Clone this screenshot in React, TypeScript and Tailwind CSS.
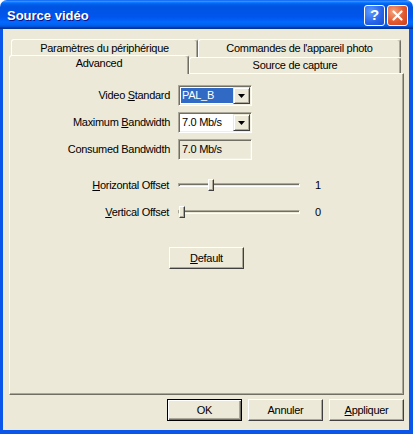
import React from "react";

const titleGradient =
  "bg-[linear-gradient(to_bottom,#0058EE_0%,#3A93FF_4%,#288EFF_6%,#127DFF_8%,#036FFC_10%,#0262EE_14%,#0057E5_20%,#0054E3_24%,#0055EB_56%,#005BF5_66%,#026AFE_76%,#0062EF_86%,#0052D6_92%,#0040AB_94%,#003092_100%)]";

const Tab = ({
  label,
  className,
}: {
  label: string;
  className: string;
}) => (
  <div
    className={`flex items-center justify-center rounded-t-[3px] border-l border-t border-r border-white border-r-[#716F64] bg-[#ECE9D8] shadow-[inset_-1px_0_#ACA899] ${className}`}
  >
    {label}
  </div>
);

const Combo = ({ value, selected = false }: { value: string; selected?: boolean }) => (
  <div className="flex h-[21px] w-[74px] border border-[#ACA899] border-r-white border-b-white bg-white shadow-[inset_1px_1px_#716F64,inset_-1px_-1px_#F1EFE2]">
    <div className="flex flex-1 p-[2px] pr-0">
      <span
        className={`flex flex-1 items-center pl-[1px] ${
          selected ? "bg-[#316AC5] text-white" : "text-black"
        }`}
      >
        {value}
      </span>
    </div>
    <div className="mt-[1px] mr-[1px] flex h-[17px] w-[17px] items-center justify-center border border-[#ECE9D8] border-r-[#404040] border-b-[#404040] bg-[#ECE9D8] shadow-[inset_1px_1px_#fff,inset_-1px_-1px_#ACA899]">
      <svg width="7" height="4" viewBox="0 0 7 4">
        <path d="M0 0h7L3.5 4z" fill="#000" />
      </svg>
    </div>
  </div>
);

const Slider = ({ offset }: { offset: number }) => (
  <div className="relative h-[4px] w-[122px] border border-[#ACA899] border-r-white border-b-white bg-[#ECE9D8] shadow-[inset_1px_1px_#716F64]">
    <div
      className="absolute top-[-5px] h-[12px] w-[6px] border border-white border-r-[#404040] border-b-[#404040] bg-[#ECE9D8] shadow-[inset_-1px_-1px_#ACA899]"
      style={{ left: offset }}
    />
  </div>
);

const Btn = ({
  children,
  primary = false,
  className = "",
}: {
  children: React.ReactNode;
  primary?: boolean;
  className?: string;
}) => (
  <div
    className={`flex h-[22px] w-[75px] items-center justify-center bg-[#ECE9D8] ${
      primary
        ? "border border-black shadow-[inset_1px_1px_#fff,inset_-1px_-1px_#716F64,inset_-2px_-2px_#ACA899]"
        : "border border-white border-r-[#404040] border-b-[#404040] shadow-[inset_-1px_-1px_#ACA899]"
    } ${className}`}
  >
    {children}
  </div>
);

export default function App() {
  return (
    <div className="flex h-[434px] w-[413px] flex-col font-['Liberation_Sans',Arial,sans-serif] text-[11px] tracking-[-0.3px] text-black">
      {/* title bar */}
      <div className={`flex h-[29px] rounded-t-[7px] pl-[7px] pr-[5px] ${titleGradient}`}>
        <span className="flex-1 pt-[6px] text-[13px] font-bold tracking-normal text-white [text-shadow:1px_1px_#0F1089]">
          Source vidéo
        </span>
        <div className="mt-[5px] flex gap-[2px]">
          <div className="flex h-[21px] w-[21px] items-center justify-center rounded-[3px] border border-white bg-[radial-gradient(circle_at_30%_30%,#5E9BFF,#2663E8_60%,#1C4FD0)] text-[15px] font-bold tracking-normal text-white">
            ?
          </div>
          <div className="flex h-[21px] w-[21px] items-center justify-center rounded-[3px] border border-white bg-[radial-gradient(circle_at_30%_30%,#F4A47E,#E2592F_55%,#C8401E)]">
            <svg width="11" height="11" viewBox="0 0 11 11">
              <path d="M1.5 1.5l8 8M9.5 1.5l-8 8" stroke="#fff" strokeWidth="2.2" strokeLinecap="round" />
            </svg>
          </div>
        </div>
      </div>

      {/* body */}
      <div className="flex flex-1 flex-col border-b-[4px] border-l-[3px] border-r-[4px] border-[#0A55EA] bg-[#ECE9D8] pl-[6px] pr-[5px] pt-[10px]">
        <div className="ml-[2px] flex h-[18px]">
          <Tab label="Paramètres du périphérique" className="w-[187px] pb-[1px]" />
          <Tab label="Commandes de l'appareil photo" className="w-[203px] pb-[1px]" />
        </div>
        <div className="-mt-[2px] flex h-[18px] items-end">
          <Tab label="Advanced" className="relative z-10 -mb-px h-[19px] w-[180px] pb-[3px]" />
          <Tab label="Source de capture" className="h-[16px] w-[212px]" />
        </div>

        {/* panel */}
        <div className="flex h-[322px] flex-col border border-white border-r-[#716F64] border-b-[#716F64] shadow-[inset_-1px_-1px_#ACA899]">
          <div className="flex flex-col gap-[6px] pt-[11px]">
            <div className="flex h-[21px] items-center gap-[8px]">
              <span className="w-[160px] text-right">
                Video <u className="underline-offset-[1px]">S</u>tandard
              </span>
              <Combo value="PAL_B" selected />
            </div>
            <div className="flex h-[21px] items-center gap-[8px]">
              <span className="w-[160px] text-right">
                Maximum <u className="underline-offset-[1px]">B</u>andwidth
              </span>
              <Combo value="7.0 Mb/s" />
            </div>
            <div className="flex h-[21px] items-center gap-[8px]">
              <span className="w-[160px] text-right">Consumed Bandwidth</span>
              <div className="flex h-[21px] w-[74px] items-center border border-[#ACA899] border-r-white border-b-white bg-[#ECE9D8] pl-[3px] shadow-[inset_1px_1px_#716F64,inset_-1px_-1px_#F1EFE2]">
                7.0 Mb/s
              </div>
            </div>
          </div>

          <div className="mt-[15px] flex flex-col gap-[7px]">
            <div className="flex h-[20px] items-center">
              <span className="w-[159px] text-right">
                <u className="underline-offset-[1px]">H</u>orizontal Offset
              </span>
              <div className="ml-[9px]">
                <Slider offset={29} />
              </div>
              <span className="ml-[12px] w-[12px] text-center">1</span>
            </div>
            <div className="flex h-[20px] items-center">
              <span className="w-[159px] text-right">
                <u className="underline-offset-[1px]">V</u>ertical Offset
              </span>
              <div className="ml-[9px]">
                <Slider offset={0} />
              </div>
              <span className="ml-[12px] w-[12px] text-center">0</span>
            </div>
          </div>

          <div className="mt-[25px] flex justify-center">
            <Btn>
              <span>
                <u className="underline-offset-[1px]">D</u>efault
              </span>
            </Btn>
          </div>
        </div>

        {/* buttons */}
        <div className="mt-[4px] flex justify-end gap-[6px]">
          <Btn primary>OK</Btn>
          <Btn>Annuler</Btn>
          <Btn>
            <span>
              <u className="underline-offset-[1px]">A</u>ppliquer
            </span>
          </Btn>
        </div>
      </div>
    </div>
  );
}
